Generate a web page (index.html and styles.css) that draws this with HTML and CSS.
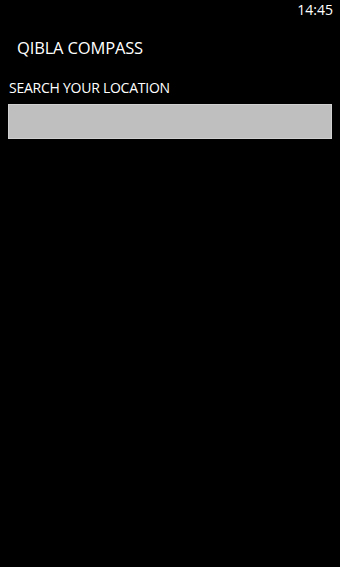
FILE: index.html
```html
<!DOCTYPE html>
<html>
<head>
<meta charset="utf-8">
<link rel="stylesheet" href="styles.css">
</head>
<body>
<div class="status"><span class="time">14:45</span></div>
<div class="title">QIBLA COMPASS</div>
<div class="label">SEARCH YOUR LOCATION</div>
<div class="box"></div>
</body>
</html>
```
FILE: styles.css
```css
html, body {
  margin: 0;
  padding: 0;
  background: #000;
  height: 100%;
}
body {
  font-family: "Open Sans", "Noto Sans", sans-serif;
  color: #fff;
}
.status {
  height: 20px;
  display: flex;
  justify-content: flex-end;
  padding-right: 7px;
}
.time {
  font-size: 14px;
  line-height: 20px;
}
.title {
  margin-top: 18px;
  padding-left: 17px;
  font-size: 16.5px;
  line-height: 20px;
  letter-spacing: -0.15px;
}
.label {
  margin-top: 20px;
  padding-left: 9px;
  font-size: 14px;
  line-height: 19px;
  letter-spacing: -0.25px;
}
.box {
  margin: 7px 8px 0;
  height: 33px;
  background: #bfbfbf;
  border: 1px solid #d0d0d0;
}
```
